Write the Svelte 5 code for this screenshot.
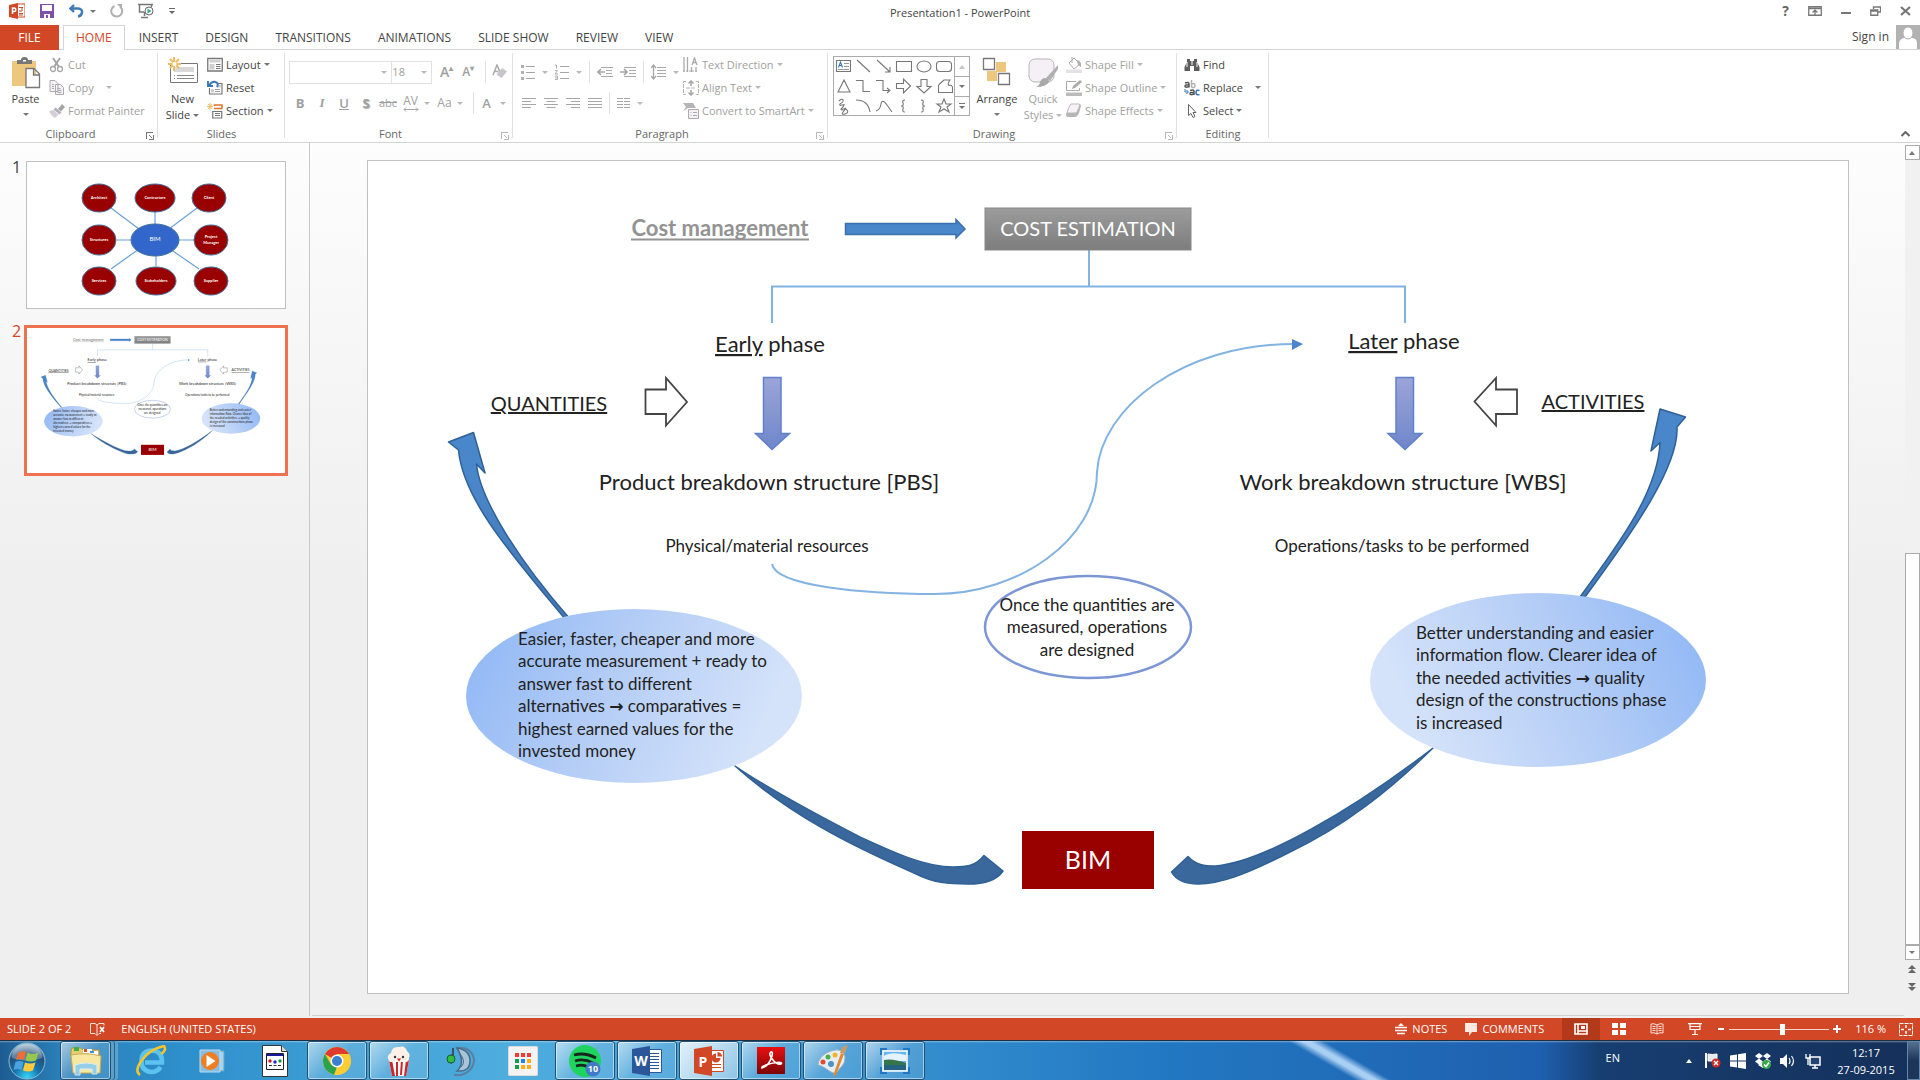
<script>
  const tabs = ['HOME', 'INSERT', 'DESIGN', 'TRANSITIONS', 'ANIMATIONS', 'SLIDE SHOW', 'REVIEW', 'VIEW'];
  let activeTab = $state('HOME');
  let activeSlide = $state(2);
  let zoom = $state(53);

  const nodes = [
    { x: 72, y: 36, rx: 17, ry: 14, lines: ['Architect'] },
    { x: 128, y: 36, rx: 20, ry: 14, lines: ['Contractors'] },
    { x: 182, y: 36, rx: 17, ry: 14, lines: ['Client'] },
    { x: 72, y: 78, rx: 17, ry: 15, lines: ['Structures'] },
    { x: 184, y: 78, rx: 17, ry: 15, lines: ['Project', 'Manager'] },
    { x: 72, y: 119, rx: 17, ry: 14, lines: ['Services'] },
    { x: 129, y: 119, rx: 20, ry: 14, lines: ['Stakeholders'] },
    { x: 184, y: 119, rx: 17, ry: 14, lines: ['Supplier'] }
  ];

  const leftNote = [
    'Easier, faster, cheaper and more',
    'accurate measurement + ready to',
    'answer fast to different',
    'alternatives → comparatives =',
    'highest earned values for the',
    'invested money'
  ];
  const rightNote = [
    'Better understanding and easier',
    'information flow. Clearer idea of',
    'the needed activities → quality',
    'design of the constructions phase',
    'is increased'
  ];
</script>

{#snippet caret()}
  <span class="caret"></span>
{/snippet}

{#snippet launcher(dim)}
  <button class="launcher" class:dim aria-label="More options">
    <svg width="8" height="8" viewBox="0 0 8 8" shape-rendering="crispEdges">
      <path d="M0.5 7V0.5H7M3 3l3 3M7.5 3v4.5H3" fill="none" stroke="currentColor" />
    </svg>
  </button>
{/snippet}

{#snippet noteLines(lines, x, y)}
  {#each lines as line, i}
    {@const parts = line.split('→')}
    <text {x} y={y + Math.round(i * 22.4)} class="t-note">{parts[0]}{#if parts[1]}<tspan class="t-arrow">→</tspan>{parts[1]}{/if}</text>
  {/each}
{/snippet}

{#snippet costSlide(id)}
  <svg class="slide-art" viewBox="368 161 1480 832">
    <defs>
      <linearGradient id="{id}-grey" x2="0" y2="1"><stop offset="0" stop-color="#9c9c9c" /><stop offset="1" stop-color="#7d7d7d" /></linearGradient>
      <linearGradient id="{id}-down" x2="0" y2="1"><stop offset="0" stop-color="#9ba5d8" /><stop offset="1" stop-color="#6f86cb" /></linearGradient>
      <linearGradient id="{id}-left" x2="1" y2="0.25"><stop offset="0" stop-color="#8cb5f5" /><stop offset="0.5" stop-color="#b4cdf6" /><stop offset="1" stop-color="#d5e3fa" /></linearGradient>
      <linearGradient id="{id}-right" x1="1" x2="0" y2="0.25"><stop offset="0" stop-color="#8cb5f5" /><stop offset="0.5" stop-color="#b4cdf6" /><stop offset="1" stop-color="#d5e3fa" /></linearGradient>
      <linearGradient id="{id}-swoosh" gradientUnits="userSpaceOnUse" x1="0" y1="480" x2="0" y2="780"><stop offset="0" stop-color="#4a86ca" /><stop offset="1" stop-color="#3a689c" /></linearGradient>
    </defs>

    <g fill="none" stroke="#82b3e2" stroke-width="2">
      <path d="M1089 250V286M772 323V286.500H1405V323" />
      <path d="M772 564C776 586 862 594 935 594C1018 594 1097 540 1097 472C1101 408 1182 344 1294 344" />
    </g>
    <path d="M1292 339L1303 344L1292 350Z" fill="#4a86ca" />

    <text x="720" y="236" text-anchor="middle" class="t-cost">Cost management</text>
    <path d="M631 239.500H809" stroke="#939393" stroke-width="2" />
    <path d="M845.500 223.500H956V219.500L965 229L956 238V234.500H845.500Z" fill="#4a86ca" stroke="#3a70ad" stroke-width="1.500" />
    <rect x="985" y="208" width="206" height="42" fill="url(#{id}-grey)" stroke="#888" />
    <text x="1088" y="236" text-anchor="middle" class="t-caps white">COST ESTIMATION</text>

    <text x="770" y="352" text-anchor="middle" class="t-head"><tspan class="under">Early</tspan> phase</text>
    <text x="1404" y="349" text-anchor="middle" class="t-head"><tspan class="under">Later</tspan> phase</text>
    <text x="549" y="411" text-anchor="middle" class="t-caps under">QUANTITIES</text>
    <text x="1593" y="409" text-anchor="middle" class="t-caps under">ACTIVITIES</text>
    <g fill="#fff" stroke="#444" stroke-width="1.800">
      <path d="M645.500 389.500H666V378L687 402L666 425.500V414H645.500Z" />
      <path d="M1517 389.500H1496V378L1474.500 401.500L1496 425.500V414H1517Z" />
    </g>
    <g fill="url(#{id}-down)" stroke="#6080cb" stroke-width="1.500">
      <path d="M763.500 377.500H781V433.500H789.500L772 449.500L755.500 433.500H763.500Z" />
      <path d="M1396 377.500H1413.500V433.500H1422L1405 449.500L1388 433.500H1396Z" />
    </g>
    <text x="769" y="490" text-anchor="middle" class="t-head">Product breakdown structure [PBS]</text>
    <text x="1403" y="490" text-anchor="middle" class="t-head">Work breakdown structure [WBS]</text>
    <text x="767" y="552" text-anchor="middle" class="t-note">Physical/material resources</text>
    <text x="1402" y="552" text-anchor="middle" class="t-note">Operations/tasks to be performed</text>

    <g fill="url(#{id}-swoosh)" stroke="#2f6096" stroke-width="1.500" stroke-linejoin="round">
      <path d="M448.500 442L473.500 432.500L485 473L476.500 464C480 500 520 562 570 619L565 619C512 555 463 500 458.500 450Z" />
      <path d="M735 766C790 815 850 845 914 873C936 884 950 884 968 884C985 884 997 880 1003 871L984 855.500C975 867 965 867 953 867C925 867 895 853 858 836C800 806 760 783 735 766Z" />
      <path d="M1685.500 417L1660 409L1651 451L1660 442.500C1658 490 1622 540 1580 597L1585 597C1636 528 1679 465 1677 427Z" />
      <path d="M1433 748C1390 790 1345 826 1290 852C1245 875 1220 884 1198 884C1185 884 1176 880 1171.500 872L1188 856.500C1196 865 1204 866 1216 866C1262 862 1350 812 1433 748Z" />
    </g>
    <ellipse cx="634" cy="696" rx="168" ry="87" fill="url(#{id}-left)" />
    <ellipse cx="1538" cy="680" rx="168" ry="87" fill="url(#{id}-right)" />
    <ellipse cx="1088" cy="627" rx="103" ry="51" fill="#fff" stroke="#7c96d6" stroke-width="2.500" />
    {@render noteLines(leftNote, 518, 645)}
    {@render noteLines(rightNote, 1416, 639)}
    <g text-anchor="middle">
      {@render noteLines(['Once the quantities are', 'measured, operations', 'are designed'], 1087, 611)}
    </g>
    <rect x="1022" y="831" width="132" height="58" fill="#900" />
    <text x="1088" y="869" text-anchor="middle" class="t-bim white">BIM</text>
  </svg>
{/snippet}

<div class="window">
  <header class="titlebar">
    <div class="quick">
      <svg width="16" height="16" viewBox="0 0 16 16"><path d="M7 1h9v13H7z" fill="#fff" stroke="#d24726" /><path d="M10 4.500h4M10 10.500h4M10 12h4M13 5v3h-3" stroke="#d24726" fill="none" /><path d="M0 2l9-2v16l-9-2z" fill="#d24726" /><path d="M3.500 11V5h1.500a1.600 1.600 0 010 3.500h-1.500" fill="none" stroke="#fff" stroke-width="1.500" /></svg>
      <button aria-label="Save"><svg width="14" height="14" viewBox="0 0 14 14"><path d="M0 0h14v14H0z" fill="#8051a8" /><path d="M2 1h10v6H2zM4 10h6v4H8v-3H6v3H4z" fill="#fff" /></svg></button>
      <button class="undo" aria-label="Undo"><svg width="15" height="14" viewBox="0 0 15 14"><path d="M5 1L1.500 4.500L5 8M2 4.500H9Q13.500 5 13 8.500T9 12.500" fill="none" stroke="#4079b6" stroke-width="2.400" /></svg>{@render caret()}</button>
      <button class="redo" aria-label="Repeat"><svg width="14" height="14" viewBox="0 0 14 14"><path d="M4.500 2A5.500 5.500 0 1010 2.600" fill="none" stroke="#b0b0b0" stroke-width="2" /><path d="M7 0h5v5z" fill="#b0b0b0" /></svg></button>
      <button class="show" aria-label="Start slide show"><svg width="16" height="16" viewBox="0 0 16 16"><path d="M0 1.500h15M1.500 2v7H6M13.500 2v2M6.500 9v4M3 14.500h7" fill="none" stroke="#777" stroke-width="1.500" /><circle cx="11" cy="8" r="4" fill="#fff" stroke="#666" /><path d="M9.500 5.500v5l4-2.500z" fill="#3ca476" /></svg></button>
      <button aria-label="Customize"><svg width="6" height="6" viewBox="0 0 6 6"><path d="M0 .5h6" stroke="#666" /><path d="M0 3h6L3 6z" fill="#666" /></svg></button>
    </div>
    <h1>Presentation1 - PowerPoint</h1>
    <div class="controls">
      <button class="help" aria-label="Help">?</button>
      <button aria-label="Ribbon options"><svg width="14" height="10" viewBox="0 0 14 10"><path d="M.75.75h12.500v8.500H.75zM1 2.500h12M7 9V4.500M4.500 6.500L7 4.200l2.500 2.300" fill="none" stroke="#777" stroke-width="1.300" /></svg></button>
      <button aria-label="Minimize"><svg width="10" height="10" viewBox="0 0 10 10"><path d="M0 7h10" stroke="#777" stroke-width="2" /></svg></button>
      <button aria-label="Restore"><svg width="11" height="10" viewBox="0 0 11 10"><path d="M3.500 3V1h7v5H8" fill="none" stroke="#777" stroke-width="1.300" /><path d="M.75 4h7v5.250h-7zM1 5h7" fill="none" stroke="#777" stroke-width="1.300" /></svg></button>
      <button aria-label="Close"><svg width="11" height="10" viewBox="0 0 11 10"><path d="M1 1l9 8M10 1l-9 8" stroke="#777" stroke-width="2.200" /></svg></button>
    </div>
  </header>

  <nav class="tabs">
    <button class="file">FILE</button>
    {#each tabs as tab}
      <button class="tab" class:active={activeTab === tab} onclick={() => (activeTab = tab)}>{tab}</button>
    {/each}
    <a class="signin" href="#signin">Sign in</a>
    <svg class="avatar" width="24" height="24" viewBox="0 0 24 24"><path d="M0 0h24v24H0z" fill="#b2b2b2" /><path d="M3 24V18q1-5 6-5q3 2 6 0q6 0 6 5v6z" fill="#fff" /><ellipse cx="12" cy="8" rx="5" ry="6" fill="#fff" stroke="#b2b2b2" /></svg>
  </nav>

  <section class="ribbon">
    <div class="group clipboard">
      <div class="body">
        <button class="big">
          <svg width="30" height="32" viewBox="0 0 30 32"><path d="M1 4h24v25H1z" fill="#eec77f" /><path d="M6 7V3h4q0-3 3.500-3T17 3h4v4z" fill="#777" /><path d="M12 3h3v1.500h-3z" fill="#fff" /><path d="M15 11.500h8l5.500 5.500v13.500H15zM22.500 12v6h6" fill="#fff" stroke="#777" stroke-width="1.300" /></svg>
          <span>Paste</span>{@render caret()}
        </button>
        <div class="rows">
          <button class="dim"><svg width="16" height="16" viewBox="0 0 16 16"><path d="M4 1l6 9M11 1L5 10" stroke="#a6a6a6" stroke-width="2" /><circle cx="4" cy="12" r="2.500" fill="none" stroke="#a6a6a6" stroke-width="1.300" /><circle cx="11" cy="12" r="2.500" fill="none" stroke="#a6a6a6" stroke-width="1.300" /></svg>Cut</button>
          <button class="dim"><svg width="16" height="16" viewBox="0 0 16 16"><path d="M1 .5h5l3 3v8H1zM6.500 4.500h5l3 3v7h-8z" fill="#f5f1f7" stroke="#aaa" /><path d="M3 4.500h2M3 6.500h2M3 8.500h2M8.500 8.500h3M8.500 10.500h4M8.500 12.500h4" stroke="#aaa" /></svg>Copy<i class="wide"></i>{@render caret()}</button>
          <button class="dim"><svg width="16" height="16" viewBox="0 0 16 16"><path d="M9 6l4-5 3 3-4 4.500z" fill="#a6a6a6" /><path d="M6.500 4.500l6 5-2 2-6-5z" fill="#b5b0b8" /><path d="M4.500 7l5 4.500L6 15Q2 13 0 8z" fill="#d4ced8" /></svg>Format Painter</button>
        </div>
      </div>
      <footer>Clipboard{@render launcher(false)}</footer>
    </div>

    <div class="group slides">
      <div class="body">
        <button class="big">
          <svg width="32" height="32" viewBox="0 0 32 32"><path d="M3.500 6.500h27v19h-27z" fill="#fff" stroke="#777" /><path d="M7 10h20v5H7z" fill="#d9d9d9" /><path d="M7 18.500h1M10 18.500h17M7 21.500h1M10 21.500h17" stroke="#888" /><path d="M7 0v14M1 7h13M3 2l9 9M12 2l-9 9" stroke="#edbd66" stroke-width="2" /><circle cx="7.500" cy="7" r="2" fill="#fff" /></svg>
          <span>New</span><span>Slide{@render caret()}</span>
        </button>
        <div class="rows">
          <button><svg width="16" height="16" viewBox="0 0 16 16"><path d="M.75 1.500h14.500v12.500H.75z" fill="#fff" stroke="#777" stroke-width="1.300" /><path d="M2.500 3h11v2.500h-11zM2.500 7h5v5.500h-5z" fill="#d0d0d0" /><path d="M9 7.500h4.500M9 9.500h4.500M9 11.500h4.500" stroke="#777" /></svg>Layout{@render caret()}</button>
          <button><svg width="16" height="16" viewBox="0 0 16 16"><path d="M2.500 8v6h12.500V3.500h-5" fill="none" stroke="#777" stroke-width="1.200" /><path d="M4 9h3v3.500H4zM11 5h3v2.500h-3z" fill="#d0d0d0" /><path d="M8 9.500h5M8 11.500h5" stroke="#999" /><path d="M1 1v5h5M2 5.500Q5 1 8.500 2T10 7" fill="none" stroke="#3b77b7" stroke-width="1.900" /></svg>Reset</button>
          <button><svg width="16" height="16" viewBox="0 0 16 16"><path d="M3 0v7M0 3.500h6M1 1l4 5M5 1L1 6" stroke="#edbd66" /><path d="M7.500 3V2h7.500v3M7 5.500h8.500" fill="none" stroke="#e0762a" stroke-width="1.500" /><path d="M5.750 8.500h9v6.500h-9zM8 10.500h5M8 12.500h5" fill="none" stroke="#777" stroke-width="1.200" /></svg>Section{@render caret()}</button>
        </div>
      </div>
      <footer>Slides</footer>
    </div>

    <div class="group font">
      <div class="tools">
        <div class="line">
          <label class="combo name"><select aria-label="Font" disabled><option></option></select>{@render caret()}</label>
          <label class="combo size"><select aria-label="Font size" disabled><option>18</option></select>{@render caret()}</label>
          <button class="glyph grow">A<sup>▴</sup></button>
          <button class="glyph shrink">A<sup>▾</sup></button>
          <i class="bar"></i>
          <button aria-label="Clear formatting"><svg width="17" height="16" viewBox="0 0 17 16"><path d="M1 11L5 1l3 7M2.500 7.500h4" fill="none" stroke="#aaa" stroke-width="1.500" /><path d="M10 4l5 3.500-5.500 6.500-5-3.500z" fill="#c9c3cc" /></svg></button>
        </div>
        <div class="line letters">
          <button><b>B</b></button>
          <button><em>I</em></button>
          <button><u>U</u></button>
          <button><b class="shadow">S</b></button>
          <button><s>abc</s></button>
          <button class="spacing">
            <span>AV<svg width="16" height="5" viewBox="0 0 16 5"><path d="M1 2.500h14M3 .5l-2 2 2 2M13 .5l2 2-2 2" fill="none" stroke="#a6a6a6" /></svg></span>{@render caret()}
          </button>
          <button class="case">Aa{@render caret()}</button>
          <i class="bar"></i>
          <button class="color">A{@render caret()}</button>
        </div>
      </div>
      <footer>Font{@render launcher(true)}</footer>
    </div>

    <div class="group paragraph">
      <div class="body">
        <div class="tools para">
          <div class="line">
            <button aria-label="Bullets"><svg width="14" height="16" viewBox="0 0 14 16"><path d="M5 2.500h9M5 8.500h9M5 14.500h9" stroke="#a6a6a6" /><path d="M0 1h3v3H0zM0 7h3v3H0zM0 13h3v3H0z" fill="#b0b0b0" /></svg>{@render caret()}</button>
            <button aria-label="Numbering"><svg width="14" height="16" viewBox="0 0 14 16"><path d="M5 2.500h9M5 8.500h9M5 14.500h9" stroke="#a6a6a6" /><path d="M0 1h1.500v3.500M0 6.500h2.500L0 10h3M0 12h2.500v3.500H0M0 13.800h2" fill="none" stroke="#b0b0b0" /></svg>{@render caret()}</button>
            <i class="bar"></i>
            <button aria-label="Decrease list level"><svg width="16" height="12" viewBox="0 0 16 12"><path d="M4 1.500h12M9 4.500h6M9 7.500h6M4 10.500h12" stroke="#aaa" /><path d="M8 6H1M4 3L1 6l3 3" fill="none" stroke="#a6a6a6" stroke-width="1.700" /></svg></button>
            <button aria-label="Increase list level"><svg width="16" height="12" viewBox="0 0 16 12"><path d="M4 1.500h12M9 4.500h7M9 7.500h7M4 10.500h12" stroke="#aaa" /><path d="M0 6h7M4 3l3 3-3 3" fill="none" stroke="#a6a6a6" stroke-width="1.700" /></svg></button>
            <i class="bar"></i>
            <button aria-label="Line spacing"><svg width="15" height="16" viewBox="0 0 15 16"><path d="M6 3.500h9M6 6.500h9M6 9.500h9M6 12.500h9" stroke="#aaa" /><path d="M2.500 1v14M0 4l2.500-3L5 4M0 12l2.500 3L5 12" fill="none" stroke="#a6a6a6" stroke-width="1.300" /></svg>{@render caret()}</button>
          </div>
          <div class="line">
            {#each ['M0 .5h14M0 3.500h9M0 6.500h14M0 9.500h9', 'M0 .5h14M2.500 3.500h9M0 6.500h14M2.500 9.500h9', 'M0 .5h14M5 3.500h9M0 6.500h14M5 9.500h9', 'M0 .5h14M0 3.500h14M0 6.500h14M0 9.500h14'] as d}
              <button class="align" aria-label="Align"><svg width="14" height="10" viewBox="0 0 14 10"><path {d} stroke="#a6a6a6" /></svg></button>
            {/each}
            <i class="bar"></i>
            <button aria-label="Columns"><svg width="13" height="10" viewBox="0 0 13 10"><path d="M0 .5h6M7 .5h6M0 3.500h6M7 3.500h6M0 6.500h6M7 6.500h6M0 9.500h6M7 9.500h6" stroke="#a6a6a6" /></svg>{@render caret()}</button>
          </div>
        </div>
        <div class="rows">
          <button class="dim"><svg width="16" height="16" viewBox="0 0 16 16"><path d="M1 0v15M4.500 0v15M8.500 10v5M13 10v5M9 8l2.500-7L14 8M10 5.500h3" fill="none" stroke="#aaa" stroke-width="1.300" /><path d="M0 14h15" stroke="#aaa" stroke-dasharray="2 1" /></svg>Text Direction{@render caret()}</button>
          <button class="dim"><svg width="16" height="16" viewBox="0 0 16 16"><path d="M3 1.500H.5v13H3M13 1.500h2.500v13H13M3 8h10" fill="none" stroke="#b5b5b5" stroke-dasharray="4 1" /><path d="M8 6V1M5.500 3.500L8 1l2.500 2.500M8 10v5M5.500 12.500L8 15l2.500-2.500" fill="none" stroke="#a6a6a6" stroke-width="1.500" /></svg>Align Text{@render caret()}</button>
          <button class="dim"><svg width="16" height="16" viewBox="0 0 16 16"><path d="M0 0h10l3 5H5L0 8l3-4z" fill="#b5b5b5" /><path d="M5.500 6.500h10v9h-10z" fill="#f5f1f7" stroke="#aaa" /><path d="M7.500 9.500h1M10 9.500h4M7.500 12.500h1M10 12.500h4" stroke="#aaa" /></svg>Convert to SmartArt{@render caret()}</button>
        </div>
      </div>
      <footer>Paragraph{@render launcher(true)}</footer>
    </div>

    <div class="group drawing">
      <div class="body">
        <div class="gallery">
          <svg width="120" height="58" viewBox="0 0 120 58" fill="none" stroke="#777" stroke-width="1.100">
            <path d="M2.500 3.500h14v11h-14z" /><path d="M10 6.500h5M10 9.500h5M4 12.500h11" stroke="#999" /><path d="M4.500 10.500L6.500 5l2 5.500M5 8.500h3" stroke="#3b77b7" />
            <path d="M23 3l13 12M43 3l13 12M56 10v5h-5" />
            <path d="M62.500 4.500h15v10h-15z" /><ellipse cx="90" cy="9.500" rx="7" ry="5.500" /><rect x="102.500" y="4.500" width="15" height="10" rx="3" />
            <path d="M10 23l6 12H4zM22 23.500h7v11h7M42 23.500h7v10h6M53 31l3 2.500-3 2.500" />
            <path d="M62.500 26.500h7V22l7 7-7 7v-4.500h-7zM87 22.500h6v7h4L90 36l-7-6.500h4zM106 26.500l4-3.500h6q-3 4-1 5.500 3-1 3.500 2v5h-14v-7z" />
            <path d="M5 44q3-3 4-1t-3 4q-1 2 2 1t2 0q0 1-2 3t0 2q3-3 5 0t-2 4-2-2 3-4M22 43q12 0 14 12M42 54q4-1 5-7t6 1 5 7M71 43q-3 0-2 3t-2 3q3 0 2 3t2 3M87 43q3 0 2 3t2 3q-3 0-2 3t-2 3" />
            <path d="M110 42l2 5h5l-4 3 2 5-5-3-5 3 2-5-4-3h5z" />
          </svg>
          <div class="scroll">
            <button class="off" aria-label="Previous row"><span class="caret up"></span></button>
            <button aria-label="Next row">{@render caret()}</button>
            <button aria-label="More shapes"><span class="more">{@render caret()}</span></button>
          </div>
        </div>
        <button class="big arrange">
          <svg width="30" height="32" viewBox="0 0 30 32"><path d="M14 5h10v10H14zM5 14h10v10H5z" fill="#eec77f" /><path d="M1.500 1.500h11v11h-11zM16.500 16.500h11v11h-11z" fill="#fff" stroke="#777" stroke-width="1.300" /></svg>
          <span>Arrange</span>{@render caret()}
        </button>
        <button class="big dim">
          <svg width="32" height="32" viewBox="0 0 32 32"><rect x="2" y="2" width="25" height="23" rx="6" fill="#f4f0f6" stroke="#b5b5b5" /><path d="M31 8L19 21l4 3 8-12z" fill="#b0b0b0" /><path d="M17 21q5 0 5 4-3 5-13 5 4-2 4-5 1-3 4-4z" fill="#a9a9a9" /></svg>
          <span>Quick</span><span>Styles{@render caret()}</span>
        </button>
        <div class="rows">
          <button class="dim"><svg width="16" height="16" viewBox="0 0 16 16"><path d="M3 6l5-5 6 6-6 5zM6 0v6" fill="#fff" stroke="#aaa" /><path d="M11 3q5 1 4 7l-3-2z" fill="#b0b0b0" /><path d="M0 12.500h16V16H0z" fill="#e6e1e8" /></svg>Shape Fill{@render caret()}</button>
          <button class="dim"><svg width="16" height="16" viewBox="0 0 16 16"><path d="M10 1.500H.5v9h13V8" fill="#fff" stroke="#aaa" /><path d="M6 9l1-3 7-6 2 2-7 6z" fill="#a9a9a9" /><path d="M0 12.500h16V16H0z" fill="#bbb" /></svg>Shape Outline{@render caret()}</button>
          <button class="dim"><svg width="16" height="16" viewBox="0 0 16 16"><path d="M5 1h8q2 0 2 2l-2 7q-2 4-4 4H2q-2 0-2-3z" fill="#b5b5b5" /><path d="M5 1h8q1 0 .5 2L11 9q-1 1-2 1H2q-1 0-.5-2L4 2z" fill="#f5f1f7" stroke="#bbb" /></svg>Shape Effects{@render caret()}</button>
        </div>
      </div>
      <footer>Drawing{@render launcher(true)}</footer>
    </div>

    <div class="group editing">
      <div class="body">
        <div class="rows">
          <button><svg width="16" height="16" viewBox="0 0 16 16"><path d="M3 2h3v2h4V2h3v3l2.500 5v4H10V9H6v5H.5v-4L3 5z" fill="#5d5d5d" /><path d="M8 4v4M3 5v5M13 5v5" stroke="#fff" /></svg>Find</button>
          <button><svg width="16" height="16" viewBox="0 0 16 16" fill="none"><path d="M1 3q4-1.500 4 1v3.500M5 5Q1 4.500 1 6.200T5 6.500" stroke="#555" stroke-width="1.500" /><path d="M7.500 0v7.500M7.500 4q3.500-1.500 3.500 1.500T7.500 7" stroke="#b0b0b0" stroke-width="1.400" /><path d="M1 9v3h3M2.500 10l2 2-2 2" stroke="#3b77b7" /><path d="M6 10.500q4-1.500 4 1V15M10 12.500q-4-.5-4 1.200t4 .3" stroke="#555" stroke-width="1.500" /><path d="M15.500 10.500q-3.500-1-3.500 2t3.500 2" stroke="#3b77b7" stroke-width="1.600" /></svg>Replace<i class="wide"></i>{@render caret()}</button>
          <button><svg width="16" height="16" viewBox="0 0 16 16"><path d="M4.500 1.500v11l2.500-2 2 4 2-1-2-4h3z" fill="#fff" stroke="#666" /></svg>Select{@render caret()}</button>
        </div>
      </div>
      <footer>Editing</footer>
    </div>
    <button class="collapse" aria-label="Collapse ribbon"><svg width="9" height="6" viewBox="0 0 9 6"><path d="M.5 5l4-4 4 4" fill="none" stroke="#666" stroke-width="2" /></svg></button>
  </section>

  <main class="workspace">
    <aside class="thumbs">
      <button class="thumb" class:current={activeSlide === 1} onclick={() => (activeSlide = 1)}>
        <span class="num">1</span>
        <svg class="slide-art" viewBox="0 0 258 146">
          <path d="M84 46l28 21M128 50v14M170 46l-28 21M90 78h16M152 78h16M84 107l28-20M129 104V92M172 107l-29-20" stroke="#6ca2d8" stroke-width="1.200" />
          {#each nodes as n}
            <ellipse cx={n.x} cy={n.y} rx={n.rx} ry={n.ry} fill="#900" stroke="#41719c" />
            {#each n.lines as line, i}
              <text class="node" x={n.x} y={n.y + 1 + i * 6 - (n.lines.length - 1) * 3} text-anchor="middle">{line}</text>
            {/each}
          {/each}
          <ellipse cx="128" cy="78" rx="24" ry="16" fill="#3366cb" stroke="#41719c" />
          <text class="hub" x="128" y="79" text-anchor="middle">BIM</text>
        </svg>
      </button>
      <button class="thumb" class:current={activeSlide === 2} onclick={() => (activeSlide = 2)}>
        <span class="num">2</span>
        {@render costSlide('thumb')}
      </button>
    </aside>
    <div class="stage">
      <div class="slide">{@render costSlide('main')}</div>
    </div>
    <div class="scrollbar">
      <button class="boxed" aria-label="Scroll up"><span class="caret up"></span></button>
      <div class="track"><div class="grip"></div></div>
      <button class="boxed" aria-label="Scroll down">{@render caret()}</button>
      <button aria-label="Previous slide"><svg width="8" height="9" viewBox="0 0 8 9"><path d="M4 0l4 4H0zM4 4l4 4H0z" fill="#666" /></svg></button>
      <button aria-label="Next slide"><svg width="8" height="9" viewBox="0 0 8 9"><path d="M0 0h8L4 4zM0 4h8L4 8z" fill="#666" /></svg></button>
    </div>
  </main>

  <footer class="status">
    <span>SLIDE 2 OF 2</span>
    <button class="proof" aria-label="Proofing"><svg width="15" height="13" viewBox="0 0 15 13"><path d="M7 2L5 .5H.5v10H5l2 2 2-2h2M7 2v10M7 2L9 .5h5v2" fill="none" stroke="#fbe4de" /><path d="M10 4l4 5M14 4l-4 5" stroke="#fff" stroke-width="1.700" /></svg></button>
    <button>ENGLISH (UNITED STATES)</button>
    <div class="right">
      <button class="notes"><svg width="12" height="12" viewBox="0 0 12 12"><path d="M6 0l3 3H3z" fill="#fff" /><path d="M0 4.500h12M0 7.500h12M2 10.500h8" stroke="#fff" stroke-width="1.300" /></svg>NOTES</button>
      <button class="comments"><svg width="12" height="13" viewBox="0 0 12 13"><path d="M0 0h12v9H7l-3 4V9H0z" fill="#fbe9e4" /></svg>COMMENTS</button>
      <button class="view on" aria-label="Normal"><svg width="14" height="12" viewBox="0 0 14 12"><path d="M1 1h12v10H1zM4 1v10M4 8h9" fill="none" stroke="#fff" stroke-width="1.600" /><path d="M7 3h4v3H7z" fill="#fff" /></svg></button>
      <button class="view" aria-label="Slide sorter"><svg width="14" height="12" viewBox="0 0 14 12"><path d="M0 0h6v5H0zM8 0h6v5H8zM0 7h6v5H0zM8 7h6v5H8z" fill="#fff" /></svg></button>
      <button class="view" aria-label="Reading view"><svg width="14" height="12" viewBox="0 0 14 12"><path d="M7 2Q4 0 1 1v9q3-1 6 1 3-2 6-1V1Q10 0 7 2v9M2.500 3.500h3M2.500 5.500h3M2.500 7.500h3M8.500 3.500h3M8.500 5.500h3M8.500 7.500h3" fill="none" stroke="#fbe4de" /></svg></button>
      <button class="view" aria-label="Slide show"><svg width="14" height="12" viewBox="0 0 14 12"><path d="M0 .7h14M2 1v5.500h10V1M7 7v4M4 11.500h6M2 3.500h10" fill="none" stroke="#fff" stroke-width="1.200" /></svg></button>
      <button class="less" aria-label="Zoom out"><svg width="8" height="8" viewBox="0 0 8 8"><path d="M1 4h6" stroke="#fff" stroke-width="2" /></svg></button>
      <input type="range" min="0" max="100" bind:value={zoom} aria-label="Zoom" />
      <button aria-label="Zoom in"><svg width="8" height="8" viewBox="0 0 8 8"><path d="M0 4h8M4 0v8" stroke="#fff" stroke-width="2" /></svg></button>
      <span class="percent">116 %</span>
      <button aria-label="Fit slide"><svg width="14" height="13" viewBox="0 0 14 13"><path d="M.5.500h13v12H.5z" fill="none" stroke="#fff" stroke-dasharray="4 1" /><path d="M7 2v3M7 8v3M2 6.500h3M9 6.500h3" stroke="#fff" stroke-width="1.500" /></svg></button>
    </div>
  </footer>

  <div class="taskbar">
    <button class="start" aria-label="Start">
      <svg width="38" height="38" viewBox="0 0 38 38">
        <defs><radialGradient id="orb" cx=".5" cy=".95" r=".9"><stop offset="0" stop-color="#35d6f8" /><stop offset=".4" stop-color="#1673ae" /><stop offset=".75" stop-color="#244f78" /><stop offset="1" stop-color="#9ab9cf" /></radialGradient></defs>
        <circle cx="19" cy="19" r="18" fill="url(#orb)" stroke="#8fb9d2" />
        <path d="M4 16a15 14 0 0130 0q-15 5-30 0z" fill="#fff" opacity=".28" />
        <path d="M10 11q4-3 8-1l-2 8q-4-2-8 0z" fill="#ee6c35" /><path d="M19.500 10.500q5 3 11 0l-2.500 8q-5 2-10.500 0z" fill="#95c84b" /><path d="M7.500 20q4-2 8 0l-2 8q-4-2-8 0z" fill="#4aa3e0" /><path d="M17 20.500q5 2 10.500 0l-2.500 8q-5 2-10 0z" fill="#fbcb3c" />
      </svg>
    </button>
    <button class="task open explorer" aria-label="Explorer">
      <svg width="34" height="32" viewBox="0 0 34 32"><path d="M2 6l1-3h9l2 2h16v6H2z" fill="#e7cd6e" stroke="#b5973e" /><path d="M5 2h5v4H5z" fill="#41ad46" /><path d="M14 4h9v4h-9z" fill="#fff" /><path d="M15 4h3v3h-3z" fill="#d2552a" /><path d="M20 6h9v4h-9z" fill="#fff" /><path d="M21 6h4v2h-4z" fill="#3f8fd2" /><path d="M2 10q15-3 30 1l-1 17H4z" fill="#f7e7a0" stroke="#c8ac58" /><path d="M6 30V20q11-4 22 0v9h-5v-5H11v6z" fill="#8bcdef" stroke="#d9f1fc" opacity=".9" /></svg>
    </button>
    <button class="task" aria-label="Internet Explorer">
      <svg width="32" height="32" viewBox="0 0 32 32"><path d="M25.500 22q-3 5-9.500 5-9.500-1-9.500-11T17 5.500q10.500.5 10 12H10" fill="none" stroke="#5cc3f0" stroke-width="4.600" /><path d="M5 30Q-1 26 7 15T29 1q3 4-3 8" fill="none" stroke="#f4c62b" stroke-width="2.600" /></svg>
    </button>
    <button class="task" aria-label="Media Player">
      <svg width="28" height="26" viewBox="0 0 28 26"><path d="M20 3h5v20h-5z" fill="#a5d2ec" stroke="#5fa4cc" /><path d="M1 2h20v22H1z" fill="#86bee3" stroke="#b9dcf0" /><circle cx="11" cy="13" r="9" fill="#ef7d22" /><path d="M7.500 7v12l9-6z" fill="#fff" /></svg>
    </button>
    <button class="task" aria-label="Document">
      <svg width="26" height="32" viewBox="0 0 26 32"><path d="M.5.500h19l6 6v25H.5z" fill="#fff" stroke="#333" /><path d="M19.500.500v6h6" fill="#ddd" stroke="#333" /><path d="M4.500 8.500h17v16h-17z" fill="#fff" stroke="#222" /><path d="M5 9h16v2H5z" fill="#1a1a9c" /><circle cx="8" cy="16" r="1.700" fill="#d41a1a" /><circle cx="13" cy="17" r="1.700" fill="#2525d2" /><circle cx="18" cy="16" r="1.700" fill="#149a3a" /><path d="M7 20.500h3M11.500 20.500h3M16 20.500h3" stroke="#333" /></svg>
    </button>
    <button class="task open" aria-label="Chrome">
      <svg width="30" height="30" viewBox="0 0 30 30"><circle cx="15" cy="15" r="14" fill="#fc3" /><path d="M15 15L2.900 8A14 14 0 0127.100 8H15z" fill="#df3a2d" /><path d="M2.900 8L9 18.500 15 21l-3 7.700A14 14 0 012.900 8z" fill="#2ca24c" /><circle cx="15" cy="15" r="6.500" fill="#fff" /><circle cx="15" cy="15" r="5" fill="#3b7fd0" /></svg>
    </button>
    <button class="task open" aria-label="Popcorn Time">
      <svg width="24" height="30" viewBox="0 0 24 30"><path d="M2 14l3 16h14l3-16z" fill="#fff" /><path d="M2 14h3l3 16H5zM9 14h2v16h-2zM14 14h2l-1 15h-2zM19 14h3l-3 16h-2z" fill="#d0232a" /><path d="M3 16q-5-6 1-9 1-7 8-6 6-2 8 4 4 3 2 7 0 4-3 4z" fill="#fbf1e8" /><circle cx="8" cy="11" r="1.200" fill="#333" /><circle cx="16" cy="11" r="1.200" fill="#333" /><path d="M10 12.500h4l-2 3z" fill="#d0232a" /></svg>
    </button>
    <button class="task" aria-label="TeamSpeak">
      <svg width="32" height="32" viewBox="0 0 32 32"><path d="M11 3Q26 1 29 14q0 12-13 16h-7" fill="none" stroke="#5b7f9e" stroke-width="2" /><path d="M12 3q13 2 13 13t-13 10q9-8 0-23z" fill="#a9c4d8" stroke="#476a86" stroke-width="1.500" /><path d="M14 8q8 8 2 14" fill="none" stroke="#476a86" /><path d="M8 3v7q-5 1-5 4t4 4" fill="none" stroke="#3a5167" stroke-width="2" /><circle cx="6" cy="14" r="4" fill="#2fbd42" stroke="#1d5d31" /></svg>
    </button>
    <button class="task" aria-label="Apps">
      <svg width="30" height="30" viewBox="0 0 30 30"><rect width="30" height="30" rx="2" fill="#f3f3f3" stroke="#c4c4c4" /><path d="M7 7h4v4H7zM13 7h4v4h-4zM19 7h4v4h-4z" fill="#f23b35" /><path d="M7 13h4v4H7zM7 19h4v4H7z" fill="#149c54" /><path d="M13 13h4v4h-4z" fill="#1b86e8" /><path d="M19 13h4v4h-4zM13 19h4v4h-4zM19 19h4v4h-4z" fill="#fdae17" /></svg>
    </button>
    <button class="task open" aria-label="Spotify">
      <svg width="32" height="32" viewBox="0 0 32 32"><circle cx="16" cy="16" r="16" fill="#1ed35e" /><path d="M5 10q11-3 22 3M6 16q9-3 18 2M7 21q7-2 12 1" fill="none" stroke="#17251c" stroke-width="2.800" /><circle cx="24" cy="24" r="7.500" fill="#4279c8" /><text class="badge" x="24" y="27" text-anchor="middle">10</text></svg>
    </button>
    <button class="task open" aria-label="Word">
      <svg width="30" height="30" viewBox="0 0 30 30"><path d="M14 3.500h15.500v23H14z" fill="#fff" stroke="#2b579a" /><path d="M18 7.500h9M18 10.500h9M18 13.500h9M18 16.500h9M18 19.500h9M18 22.500h9" stroke="#2b579a" /><path d="M0 3l18-3v30L0 27z" fill="#2b579a" /><text class="office" x="9" y="20" text-anchor="middle">W</text></svg>
    </button>
    <button class="task open front" aria-label="PowerPoint">
      <svg width="30" height="30" viewBox="0 0 30 30"><path d="M14 4.500h15.500v21H14z" fill="#fff" stroke="#d24726" /><path d="M22 7.500a4.500 4.500 0 104.500 4.500h-4.500z" fill="#d24726" /><path d="M23.500 6v4.500h4.500q0-4-4.500-4.500z" fill="#d24726" /><path d="M18 18.500h9M18 21.500h9" stroke="#d24726" /><path d="M0 3l18-3v30L0 27z" fill="#d24726" /><text class="office" x="9" y="21" text-anchor="middle">P</text></svg>
    </button>
    <button class="task open" aria-label="Acrobat Reader">
      <svg width="28" height="27" viewBox="0 0 28 27"><defs><linearGradient id="pdf" x2="0" y2="1"><stop offset="0" stop-color="#e80f10" /><stop offset="1" stop-color="#7c0606" /></linearGradient></defs><path d="M0 0h28v27H0z" fill="url(#pdf)" /><path d="M5 21q7-2 10-12 1-5-1-4-3 2 2 8 4 5 8 4 2-2-4-1.500T9 18q-5 2-4 3z" fill="none" stroke="#fff" stroke-width="1.600" /></svg>
    </button>
    <button class="task open" aria-label="Paint">
      <svg width="32" height="31" viewBox="0 0 32 31"><path d="M1 20Q2 10 14 6t14 6q0 6-3 9t-5 6-9-2-10-5z" fill="#e6eef3" stroke="#9db4c2" /><circle cx="6" cy="17" r="2.500" fill="#e14b36" /><circle cx="11" cy="12" r="2.500" fill="#49b04b" /><circle cx="18" cy="10" r="2.500" fill="#f0b429" /><circle cx="14" cy="19" r="3" fill="#4a94c9" /><path d="M16 31l8-23 3 1-8 21z" fill="#e08a35" /><path d="M23 8l2-6 6-2-3 8z" fill="#c79b6a" /></svg>
    </button>
    <button class="task open" aria-label="Photo">
      <svg width="30" height="26" viewBox="0 0 30 26"><path d="M1 7V1h6M23 1h6v6M29 19v6h-6M7 25H1v-6" fill="none" stroke="#2277c2" stroke-width="2" /><path d="M3 3h24v20H3z" fill="#69b6ef" stroke="#fff" stroke-width="1.500" /><path d="M4 8q7-5 22-1v6H4z" fill="#e4f3fc" /><path d="M4 12q8-2 22 3v2H4z" fill="#35754a" /><path d="M4 17h22v5H4z" fill="#24647f" /></svg>
    </button>
    <div class="tray">
      <span class="lang">EN</span>
      <span class="caret up"></span>
      <svg width="16" height="17" viewBox="0 0 16 17"><path d="M1 1v15" stroke="#fff" stroke-width="2" /><path d="M3 2q4 1 9 0v7H3z" fill="#e5e9ee" stroke="#fff" /><circle cx="11" cy="11" r="4.500" fill="#d02a25" /><path d="M9 9l4 4M13 9l-4 4" stroke="#fff" stroke-width="1.400" /></svg>
      <svg width="16" height="16" viewBox="0 0 16 16"><path d="M0 2.500l7-1v6H0zM8 1.300L16 0v7.500H8zM0 8.500h7v6l-7-1zM8 8.500h8V16l-8-1.300z" fill="#fff" /></svg>
      <svg width="16" height="16" viewBox="0 0 16 16"><path d="M4 0l4 3-4 3-4-3zM12 0l4 3-4 3-4-3zM4 5.500l4 3-4 3-4-3zM12 5.500l4 3-4 3-4-3zM3 12l5-3 5 3-5 3z" fill="#fff" /><circle cx="11.500" cy="11.500" r="4.500" fill="#35a947" /><path d="M9 11.500l2 2 3-4" fill="none" stroke="#fff" stroke-width="1.500" /></svg>
      <svg width="16" height="16" viewBox="0 0 16 16"><path d="M0 5h3l4-4v14l-4-4H0z" fill="#fff" /><path d="M9 5q2 3 0 6M11.500 3q4 5 0 10" fill="none" stroke="#fff" stroke-width="1.200" /></svg>
      <svg width="16" height="16" viewBox="0 0 16 16"><path d="M5 4h10v8H5zM7 15h6M10 12v3" fill="#23446e" stroke="#fff" stroke-width="1.500" /><path d="M1 1v4h4V1M3 5v7" fill="none" stroke="#fff" stroke-width="1.300" /></svg>
      <div class="clock"><span>12:17</span><span>27-09-2015</span></div>
      <button class="desktop" aria-label="Show desktop"></button>
    </div>
  </div>
</div>

<style>
  :global(body) {
    margin: 0;
  }

  .window {
    display: flex;
    flex-direction: column;
    height: 100vh;
    overflow: hidden;
    background: #fff;
    color: #444;
    font-family: 'Open Sans', 'Noto Sans', sans-serif;
    font-size: 11px;
    line-height: 16px;
  }

  button {
    display: inline-flex;
    align-items: center;
    justify-content: center;
    padding: 0;
    border: 0;
    background: none;
    color: inherit;
    font: inherit;
    white-space: nowrap;
  }

  svg {
    display: block;
    flex: none;
  }

  .caret {
    flex: none;
    width: 0;
    height: 0;
    border: 3px solid transparent;
    border-top-color: #777;
    border-bottom: 0;
  }
  .caret.up {
    border-top: 0;
    border-bottom: 4px solid #777;
  }
  .dim .caret,
  .tools .caret {
    border-top-color: #b8b8b8;
  }
  .dim {
    color: #a0a0a0;
  }

  /* title bar */
  .titlebar {
    display: grid;
    grid-template-columns: 1fr auto 1fr;
    height: 25px;
  }
  .titlebar h1 {
    margin: 0;
    font-size: 11px;
    font-weight: 400;
    line-height: 25px;
  }
  .quick {
    display: flex;
    align-items: center;
    gap: 15px;
    height: 22px;
    padding-left: 9px;
  }
  .undo {
    gap: 6px;
  }
  .redo,
  .undo {
    margin-right: -1px;
  }
  .controls {
    display: flex;
    align-items: center;
    justify-content: flex-end;
    gap: 19px;
    height: 22px;
    padding-right: 9px;
  }
  .help {
    color: #666;
    font-size: 14px;
    font-weight: 700;
  }

  /* tabs */
  .tabs {
    display: flex;
    height: 24px;
    border-bottom: 1px solid #d4d4d4;
    font-size: 12px;
  }
  .file {
    width: 59px;
    height: 25px;
    margin-right: 4px;
    background: #d24726;
    color: #fff;
  }
  .tab {
    height: 25px;
    padding: 0 13px 0 14px;
  }
  .tab.active {
    padding: 0 12px;
    border: 1px solid #d4d4d4;
    border-bottom: 0;
    background: #fff;
    color: #d24726;
  }
  .signin {
    margin-left: auto;
    padding-right: 7px;
    color: #444;
    line-height: 24px;
    text-decoration: none;
  }

  /* ribbon */
  .ribbon {
    display: flex;
    height: 89px;
    padding-top: 3px;
    border-bottom: 1px solid #d4d4d4;
  }
  .group {
    display: flex;
    flex-direction: column;
    justify-content: space-between;
    box-sizing: border-box;
    background: linear-gradient(#e1e1e1, #e1e1e1) right top / 1px 85px no-repeat;
  }
  .clipboard { width: 158px; }
  .slides { width: 127px; }
  .font { width: 228px; }
  .paragraph { width: 315px; }
  .drawing { width: 349px; }
  .editing { width: 92px; }
  .body {
    display: flex;
  }
  .group footer {
    position: relative;
    height: 16px;
    color: #666;
    text-align: center;
  }
  .clipboard footer,
  .font footer,
  .paragraph footer,
  .drawing footer {
    padding-right: 17px;
  }
  .launcher {
    position: absolute;
    right: 4px;
    bottom: 2px;
    color: #777;
  }
  .launcher.dim {
    color: #b8b8b8;
  }
  .big {
    flex-direction: column;
    justify-content: flex-start;
    width: 46px;
    height: 72px;
    padding-top: 4px;
    line-height: 16px;
  }
  .big span:not(.caret) {
    display: flex;
    align-items: center;
    gap: 3px;
  }
  .big svg {
    margin-bottom: 2px;
  }
  .big > .caret {
    margin-top: 6px;
  }
  .clipboard .big {
    width: 49px;
    padding-left: 2px;
  }
  .slides .big {
    width: 49px;
  }
  .rows {
    display: grid;
    grid-template-rows: repeat(3, 23px);
    justify-items: start;
  }
  .rows button {
    gap: 3px;
  }
  .wide {
    width: 6px;
  }

  .tools {
    display: flex;
    flex-direction: column;
    gap: 7px;
    padding: 7px 4px 0;
    color: #a0a0a0;
  }
  .line {
    display: flex;
    align-items: center;
    height: 24px;
  }
  .bar {
    width: 1px;
    height: 22px;
    background: #e1e1e1;
  }
  .combo {
    display: flex;
    align-items: center;
    box-sizing: border-box;
    height: 23px;
    padding-right: 4px;
    border: 1px solid #e1e1e1;
  }
  .combo + .combo {
    border-left: 0;
  }
  .combo select {
    flex: 1;
    min-width: 0;
    border: 0;
    appearance: none;
    background: none;
    color: #a0a0a0;
    font: inherit;
    opacity: 1;
  }
  .name { width: 105px; }
  .size { width: 40px; }
  .glyph {
    width: 22px;
    font-size: 14px;
    font-weight: 600;
  }
  .glyph sup {
    font-size: 8px;
    line-height: 8px;
    align-self: flex-start;
  }
  .grow { margin-left: 4px; }
  .shrink { font-size: 12px; }
  .font .line .bar {
    margin: 0 6px;
  }
  .letters button {
    width: 22px;
    font-size: 13px;
  }
  .letters em {
    font-family: 'Liberation Serif', serif;
    font-weight: 700;
  }
  .letters u {
    font-weight: 600;
  }
  .letters s {
    font-size: 11px;
  }
  .shadow {
    text-shadow: 1px 1px 1px #aaa;
  }
  .letters .spacing,
  .letters .case,
  .letters .color {
    gap: 5px;
    width: 34px;
    font-size: 12px;
  }
  .spacing > span:first-child {
    line-height: 12px;
  }
  .letters .color {
    gap: 9px;
    width: 28px;
    font-size: 13px;
    font-weight: 600;
  }
  .para {
    width: 162px;
    padding-left: 8px;
    padding-right: 0;
  }
  .para .line {
    gap: 7px;
  }
  .para button {
    gap: 7px;
  }
  .align {
    width: 15px;
  }

  .gallery {
    display: flex;
    box-sizing: border-box;
    width: 137px;
    height: 60px;
    margin: 3px 4px 0 5px;
    border: 1px solid #ababab;
  }
  .scroll {
    display: grid;
    flex: 1;
    grid-template-rows: repeat(3, 1fr);
    border-left: 1px solid #ababab;
  }
  .scroll button + button {
    border-top: 1px solid #ababab;
  }
  .off .caret.up {
    border-bottom-color: #c4c4c4;
  }
  .more {
    padding-top: 2px;
    border-top: 1px solid #777;
  }
  .more .caret {
    display: block;
  }
  .editing .rows {
    padding-left: 7px;
  }
  .collapse {
    align-self: flex-end;
    margin: 0 10px 5px auto;
  }

  /* workspace */
  .workspace {
    display: flex;
    flex: 1;
    min-height: 0;
    background: linear-gradient(#fdfdfd, #efefef 50%);
  }
  .thumbs {
    box-sizing: border-box;
    width: 310px;
    margin-bottom: 2px;
    padding-top: 18px;
    border-right: 1px solid #c8c8c8;
  }
  .thumb {
    display: flex;
    align-items: flex-start;
    justify-content: flex-start;
    width: 288px;
    margin-bottom: 16px;
    text-align: left;
  }
  .thumb .num {
    width: 26px;
    padding-left: 12px;
    box-sizing: border-box;
    font-size: 16px;
    line-height: 12px;
  }
  .thumb .slide-art {
    width: 258px;
    border: 1px solid #c0c0c0;
    background: #fff;
  }
  .thumb.current .num {
    width: 24px;
    color: #d24726;
  }
  .thumb.current .slide-art {
    border: 3px solid #ee7152;
  }
  .stage {
    flex: 1;
    min-width: 0;
    margin: 0 0 2px 2px;
    padding: 17px 55px 0;
    border-bottom: 1px solid #d0d0d0;
  }
  .slide {
    border: 1px solid #c0c0c0;
    background: #fff;
  }
  .slide .slide-art {
    width: 100%;
  }
  .slide-art text {
    font-family: Lato, 'Open Sans', sans-serif;
    fill: #222;
  }
  .slide-art .t-head { font-size: 22px; }
  .slide-art .t-caps { font-size: 20px; }
  .slide-art .t-cost {
    font-size: 22px;
    font-weight: 700;
    fill: #939393;
  }
  .slide-art .t-note { font-size: 17px; }
  .slide-art .t-bim { font-size: 25px; }
  .slide-art .t-arrow {
    font-family: 'DejaVu Sans', sans-serif;
    font-weight: 700;
  }
  .slide-art .white { fill: #fff; }
  .slide-art .node {
    font-size: 4px;
    font-weight: 700;
    fill: #fff;
  }
  .slide-art .hub {
    font-size: 6px;
    fill: #fff;
  }
  .under {
    text-decoration: underline;
  }

  .scrollbar {
    display: flex;
    flex-direction: column;
    align-items: center;
    width: 16px;
    padding: 2px 0 22px;
  }
  .scrollbar button {
    width: 15px;
    height: 18px;
  }
  .scrollbar .boxed {
    box-sizing: border-box;
    height: 15px;
    border: 1px solid #ababab;
    background: #fff;
  }
  .track {
    display: flex;
    flex: 1;
    flex-direction: column;
    justify-content: flex-end;
    width: 15px;
    background: #f1f1f1;
  }
  .grip {
    box-sizing: border-box;
    height: 50%;
    border: 1px solid #ababab;
    background: #fff;
  }

  /* status bar */
  .status {
    display: flex;
    align-items: center;
    height: 22px;
    padding: 0 7px;
    background: #d24726;
    color: #fff;
  }
  .proof {
    margin: 0 16px 0 19px;
  }
  .right {
    display: flex;
    align-items: center;
    height: 100%;
    margin-left: auto;
  }
  .notes,
  .comments {
    gap: 5px;
    margin-right: 18px;
  }
  .view {
    width: 38px;
    height: 100%;
  }
  .view.on {
    background: #b3391b;
  }
  .less {
    margin-left: 3px;
  }
  .right input {
    width: 100px;
    height: 12px;
    margin: 0 4px;
    appearance: none;
    background: linear-gradient(#f6d5cd, #f6d5cd) center / 100% 1px no-repeat;
  }
  .right input::-webkit-slider-thumb {
    width: 5px;
    height: 11px;
    appearance: none;
    background: #fff;
  }
  .percent {
    margin: 0 13px 0 14px;
  }

  /* taskbar */
  .taskbar {
    display: flex;
    height: 40px;
    box-sizing: border-box;
    border-top: 1px solid #1b2f45;
    background:
      linear-gradient(rgba(255, 255, 255, 0.4), rgba(255, 255, 255, 0) 2px),
      linear-gradient(30deg, transparent 40%, #a9cff5 48%, #a9cff5 52%, transparent 60%) 1285px 0 / 110px 40px no-repeat,
      linear-gradient(90deg, #1d5c93, #2b7fb8 60px, #2d8fcb 180px, #4fadde 500px, #3d9ad4 780px, #2379c3 1150px, #1e60af 1540px, #173e71 1600px, #15305a);
    color: #fff;
  }
  .start {
    width: 54px;
    margin-right: 6px;
  }
  .task {
    box-sizing: border-box;
    width: 60px;
    height: 39px;
    margin: 0 1px;
    border-radius: 3px;
  }
  .task.open {
    border: 1px solid #234f72;
    background: linear-gradient(135deg, rgba(255, 255, 255, 0.6), rgba(255, 255, 255, 0.15) 50%, rgba(255, 255, 255, 0.1));
    box-shadow: inset 0 0 0 1px rgba(255, 255, 255, 0.5);
  }
  .task.front {
    background: linear-gradient(135deg, rgba(255, 255, 255, 0.85), rgba(255, 255, 255, 0.4));
  }
  .task.explorer {
    width: 51px;
    margin: 0 9px 0 0;
    box-shadow: inset 0 0 0 1px rgba(255, 255, 255, 0.5), 3px 0 0 #5b9fcb, 4px 0 0 #26618f, 7px 0 0 #5b9fcb;
  }
  .badge {
    fill: #fff;
    font-size: 9px;
    font-weight: 700;
  }
  .office {
    fill: #fff;
    font-size: 14px;
    font-weight: 700;
  }
  .tray {
    display: flex;
    align-items: center;
    gap: 9px;
    margin-left: auto;
  }
  .tray .caret.up {
    border-bottom-color: #fff;
    margin-right: 4px;
  }
  .lang {
    margin-right: 57px;
    line-height: 34px;
    align-self: flex-start;
  }
  .clock {
    display: flex;
    flex-direction: column;
    align-items: center;
    width: 72px;
    line-height: 17px;
  }
  .desktop {
    width: 13px;
    height: 39px;
    margin-left: -4px;
    border: 1px solid #6487ab;
    background: linear-gradient(#54708f, #1c3558 50%);
  }
</style>
